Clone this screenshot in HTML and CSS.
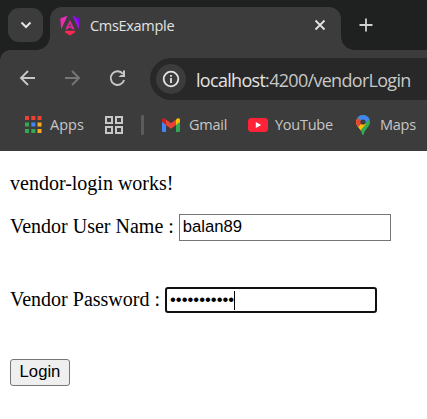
FILE: index.html
```html
<!DOCTYPE html>
<html lang="en">
<head>
<meta charset="utf-8">
<title>CmsExample</title>
<link rel="stylesheet" href="styles.css">
</head>
<body>
<header class="browser">
  <div class="tabstrip">
    <div class="tab-search"><svg width="35" height="34" viewBox="0 0 35 34"><path d="M13.5 14.500l4.500 4.500 4.500-4.500" fill="none" stroke="#e3e3e3" stroke-width="2"/></svg></div>
    <div class="tab">
      <svg class="angular" width="20" height="21" viewBox="0 0 20 21">
        <defs><linearGradient id="ng" x1="0" y1=".7" x2="1" y2=".3"><stop offset="0" stop-color="#f52aa0"/><stop offset=".5" stop-color="#e52bcb"/><stop offset="1" stop-color="#6c00f5"/></linearGradient></defs>
        <path fill="url(#ng)" d="M7.500 .8L.3 3.600l.9 10.700zM12.500 .8l7.200 2.800-.9 10.700z"/>
        <path fill="#e02799" d="M10 5l4.600 9.200h-2.700l-.6-1.400H8.700l-.6 1.400H5.400zM10 8.800l-1 2.500h2z"/>
        <path fill="#fb2852" d="M5.200 15.800h9.600l.5 1.500L10 20.600l-5.300-3.300z"/>
      </svg>
      <span class="tab-title">CmsExample</span>
      <svg class="close" width="12" height="12" viewBox="0 0 12 12"><path d="M1.500 1.500l9 9m0-9l-9 9" stroke="#e3e3e3" stroke-width="1.800"/></svg>
    </div>
    <svg class="plus" width="14" height="14" viewBox="0 0 14 14"><path d="M7 .5v13M.5 7h13" stroke="#d0d0d0" stroke-width="1.800"/></svg>
  </div>
  <div class="toolbar">
    <svg class="nav" width="138" height="24" viewBox="0 0 138 24" fill="none" stroke-width="1.900">
      <path d="M35 12H21.500M28 5l-7 7 7 7" stroke="#c7c7c7"/>
      <path d="M65 12h13.500M72 5l7 7-7 7" stroke="#777"/>
      <path d="M123 8A6.800 6.800 0 1 0 124.100 14" stroke="#c7c7c7"/><path d="M125 4.500v6.500h-6.500l2.200-2h2.300V4.500z" fill="#c7c7c7"/>
    </svg>
    <div class="omnibox">
      <span class="info"><svg width="18" height="18" viewBox="0 0 18 18"><circle cx="9" cy="9" r="7.300" fill="none" stroke="#e3e3e3" stroke-width="1.800"/><path d="M9 8v5M9 5v1.800" stroke="#e3e3e3" stroke-width="1.800"/></svg></span>
      <span class="url"><b>localhost</b>:4200/vendorLogin</span>
    </div>
  </div>
  <nav class="bookmarks">
    <svg class="apps" width="17" height="18" viewBox="0 0 17 18"><path fill="#ea4335" d="M0 0h4v4H0zM6.300 0h4v4h-4zM12.500 0h4v4h-4z"/><path fill="#34a853" d="M0 6.500h4v4H0zM0 13h4v4H0zM6.300 13h4v4h-4z"/><path fill="#4285f4" d="M6.300 6.500h4v4h-4z"/><path fill="#f9ab1f" d="M12.500 6.500h4v4h-4zM12.500 13h4v4h-4z"/></svg>
    <span class="label label-apps">Apps</span>
    <svg class="groups" width="18" height="18" viewBox="0 0 18 18"><path d="M1 1h6v6H1zM11 1h6v6h-6zM1 11h6v6H1zM11 11h6v6h-6z" fill="none" stroke="#c7c7c7" stroke-width="2"/></svg>
    <i class="divider"></i>
    <svg class="gmail" width="18" height="14" viewBox="0 0 18 14"><path fill="#4285f4" d="M0 3l4 3v8H1.200Q0 14 0 12.800z"/><path fill="#34a853" d="M14 6l4-3v9.800q0 1.200-1.200 1.200H14z"/><path fill="#fbbc04" d="M14 1.500C16-.5 18 0 18 2v1.800L14 7z"/><path fill="#c5221f" d="M0 2C0 0 2-.5 4 1.500V7L0 3.800z"/><path fill="#ea4335" d="M4 1.500l5 3.800 5-3.800V7l-5 3.800L4 7z"/></svg>
    <span class="label label-gmail">Gmail</span>
    <svg class="youtube" width="20" height="14" viewBox="0 0 20 14"><rect width="20" height="14" rx="3.500" fill="#ff2338"/><path fill="#fff" d="M7.800 4v6l5.400-3z"/></svg>
    <span class="label label-youtube">YouTube</span>
    <svg class="maps" width="14" height="20" viewBox="0 0 14 20">
      <defs><clipPath id="pin"><path d="M7 0a7 7 0 0 1 7 7c0 5-5 6.500-6.200 12.200Q7 21 6.200 19.200C5.300 14 0 11.500 0 7a7 7 0 0 1 7-7z"/></clipPath></defs>
      <g clip-path="url(#pin)"><path fill="#34a853" d="M0 0h14v20H0z"/><path fill="#fbbc04" d="M0 5l7 2 3 2-7 8H0z"/><path fill="#ea4335" d="M0 2l7 5-5.800 6H0z"/><path fill="#4285f4" d="M1.500 2V0H14v4L8 9z"/></g><circle cx="7" cy="7" r="2.600" fill="#3c3c3c"/>
    </svg>
    <span class="label label-maps">Maps</span>
  </nav>
</header>
<main class="page">
  <p class="message">vendor-login works!</p>
  <form class="login">
    <div class="row user"><label>Vendor User Name :</label><div class="field">balan89</div></div>
    <div class="row pass"><label>Vendor Password :</label><div class="field focused">•••••••••••<i class="caret"></i></div></div>
    <button class="submit" type="button">Login</button>
  </form>
</main>
</body>
</html>
```
FILE: styles.css
```css
* { box-sizing: border-box; }
body { margin: 0; width: 427px; height: 419px; overflow: hidden; background: #fff; color: #000; }
svg { display: block; flex: none; }
.browser { height: 151px; background: #3c3c3c; font-family: "Open Sans", "Noto Sans", sans-serif; color: #e3e3e3; white-space: nowrap; }
.tabstrip { height: 50px; background: #1f2120; display: flex; padding: 7px 0 0 8px; }
.tab-search { width: 35px; height: 34px; margin-top: 1px; border-radius: 11px; background: #3c3c3c; flex: none; }
.tab { position: relative; width: 291px; height: 43px; margin-left: 7px; padding: 0 15px 7px 10px; display: flex; align-items: center; background: #3c3c3c; border-radius: 12px 12px 0 0; flex: none; }
.tab::before, .tab::after { content: ""; position: absolute; bottom: 0; width: 13px; height: 13px; }
.tab::before { right: 100%; background: radial-gradient(circle at 0 0, transparent 12.5px, #3c3c3c 13px); }
.tab::after { left: 100%; background: radial-gradient(circle at 100% 0, transparent 12.5px, #3c3c3c 13px); }
.tab-title { margin: 2px 0 0 10px; font-size: 14.5px; line-height: 20px; letter-spacing: -.3px; }
.close { margin-left: auto; }
.plus { margin: 11px 0 0 18px; }
.toolbar { height: 54px; display: flex; padding-top: 8px; background: radial-gradient(circle at 10px 10px, #3c3c3c 9.5px, #1f2120 10px) 0 0 / 10px 10px no-repeat; }
.nav { margin-top: 8px; }
.omnibox { margin-left: 12px; width: 290px; height: 42px; padding-left: 6px; border-radius: 21px 0 0 21px; background: #282828; display: flex; align-items: center; flex: none; }
.info { width: 30px; height: 30px; border-radius: 50%; background: #3c3c3c; display: grid; place-items: center; flex: none; }
.url { margin: 1px 0 0 10px; font-size: 18px; line-height: 26px; letter-spacing: -.7px; color: #c7c7c7; }
.url b { font-weight: 400; color: #e3e3e3; }
.bookmarks { height: 47px; display: flex; align-items: center; padding: 0 0 5px 25px; color: #c7c7c7; }
.label { font-size: 14.5px; line-height: 20px; letter-spacing: -.25px; flex: none; }
.label-apps { margin-left: 8px; width: 55px; letter-spacing: 0; }
.divider { width: 3px; height: 20px; margin-left: 18px; border-radius: 1px; background: #5c5c5c; }
.gmail { margin-left: 18px; }
.label-gmail { margin-left: 9px; width: 59px; }
.label-youtube { margin-left: 7px; width: 81px; }
.label-maps { margin-left: 10px; }
.page { padding: 20px 10px 0; font: 20px/23px "Liberation Serif", serif; }
.message { margin: 0 0 20px; padding-top: 1px; height: 23px; }
.row { display: flex; }
.row label { margin-right: 5px; padding-top: 1px; }
.user { height: 73px; }
.pass { height: 72px; }
.field { width: 212px; height: 27px; border: 1px solid #767676; padding: 0 3px 1px; font: 16.67px/24px "Liberation Sans", sans-serif; display: flex; align-items: center; }
.focused { height: 26px; padding-bottom: 0; border: 2px solid #101010; border-radius: 3px; }
.caret { width: 1px; height: 19px; background: #000; }
.submit { display: block; width: 60px; height: 27px; padding: 0 0 1px; border: 1px solid #767676; border-radius: 3px; background: #efefef; color: #000; font: 16.67px/24px "Liberation Sans", sans-serif; }
```
